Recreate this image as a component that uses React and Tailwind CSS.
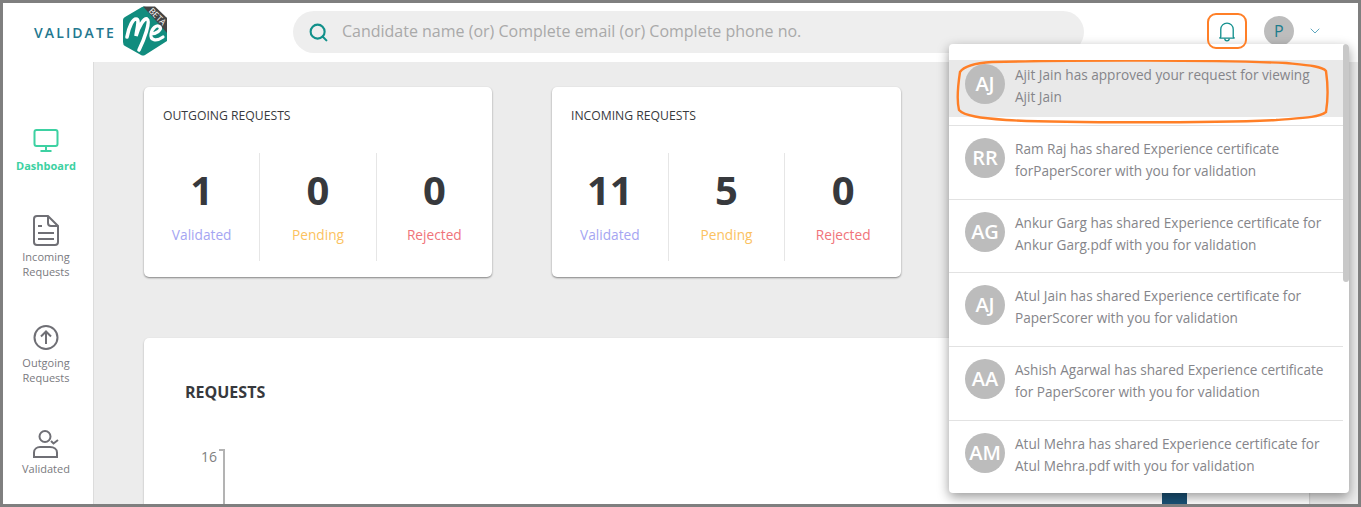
import React from 'react'
import { Search, ChevronDown } from 'lucide-react'

const NOTIFICATIONS = [
  { initials: 'AJ', lines: ['Ajit Jain has approved your request for viewing', 'Ajit Jain'], active: true },
  { initials: 'RR', lines: ['Ram Raj has shared Experience certificate', 'forPaperScorer with you for validation'] },
  { initials: 'AG', lines: ['Ankur Garg has shared Experience certificate for', 'Ankur Garg.pdf with you for validation'] },
  { initials: 'AJ', lines: ['Atul Jain has shared Experience certificate for', 'PaperScorer with you for validation'] },
  { initials: 'AA', lines: ['Ashish Agarwal has shared Experience certificate', 'for PaperScorer with you for validation'] },
  { initials: 'AM', lines: ['Atul Mehra has shared Experience certificate for', 'Atul Mehra.pdf with you for validation'] },
]

function Logo() {
  return (
    <svg width="46" height="51" viewBox="0 0 46 51" className="shrink-0">
      <path d="M20 1 Q22 0 24 1 L45 12 L45 35 L23 49 Q21 50 19 49 L3 40 Q1 39 1 36 L1 14 Q1 12 3 11 Z" fill="#118c7e" />
      <path d="M21 0.500 L33 0.500 L45 12 L45 27 Z" fill="#444444" />
      <path d="M5 31 C7 20 11 13 14 13 C18 13 15 22 14 30 C17 20 22 12 25 13 C29 15 22 34 17 44" fill="none" stroke="#fff" strokeWidth="3.600" strokeLinecap="round" />
      <path d="M29 28 C34 28 40 24 38 21 C35 18 30 22 29 28 C28 34 34 36 41 31" fill="none" stroke="#fff" strokeWidth="3.200" strokeLinecap="round" />
      <text x="35.500" y="13.500" fontSize="8.500" fill="#fff" textAnchor="middle" transform="rotate(45 35.500 10.500)" className="font-['Open_Sans',sans-serif]">BETA</text>
    </svg>
  )
}

function MonitorIcon() {
  return (
    <svg width="26" height="24" viewBox="0 0 26 24" fill="none" stroke="#3dd1a2" strokeWidth="2">
      <rect x="1.500" y="1" width="23" height="16" rx="2" />
      <path d="M13 17v4M7.500 22h11" />
    </svg>
  )
}

function DocIcon() {
  return (
    <svg width="26" height="31" viewBox="0 0 26 31" fill="none" stroke="#6f6f75" strokeWidth="2">
      <path d="M4 1h11l10 10v16a3 3 0 0 1-3 3H4a3 3 0 0 1-3-3V4a3 3 0 0 1 3-3Z" />
      <path d="M15 1v7a3 3 0 0 0 3 3h7" />
      <path d="M5 11h4M5 18h16M5 24h16" />
    </svg>
  )
}

function UpIcon() {
  return (
    <svg width="26" height="25" viewBox="0 0 26 25" fill="none" stroke="#6f6f75" strokeWidth="2">
      <circle cx="13" cy="12.500" r="11.500" />
      <path d="M13 19V7M8 11.500l5-5 5 5" />
    </svg>
  )
}

function PersonCheckIcon() {
  return (
    <svg width="26" height="28" viewBox="0 0 26 28" fill="none" stroke="#6f6f75" strokeWidth="2">
      <circle cx="12" cy="6.500" r="5.500" />
      <path d="M1 27v-4.500C1 19 4 17 7 17h10c4 0 7 2 7 5.500V27Z" />
      <path d="M18 11l2.500 2.500L25 10" />
    </svg>
  )
}

function NavItem({ icon, label, active, className, gap }) {
  return (
    <div className={`flex flex-col items-center ${className}`}>
      {icon}
      <div className={`text-center text-[11px] leading-[15px] ${gap} ${active ? 'font-bold text-[#3dd1a2]' : 'text-[#7a7a80]'}`}>
        {label.map((line) => (
          <div key={line}>{line}</div>
        ))}
      </div>
    </div>
  )
}

function Stat({ value, label, color, divider }) {
  return (
    <div className={`flex h-[108px] flex-1 flex-col items-center ${divider ? 'border-l border-[#e6e6e6]' : ''}`}>
      <div className="mt-[12px] text-[40px] leading-[50px] font-bold text-[#37393d]">{value}</div>
      <div className={`mt-[10px] text-[13.700px] leading-[20px] ${color}`}>{label}</div>
    </div>
  )
}

function StatCard({ title, stats, className }) {
  return (
    <div className={`h-[190px] shrink-0 rounded-[5px] bg-white pt-[21px] shadow-[0_1px_2px_rgba(0,0,0,0.45)] ${className}`}>
      <div className="pl-[19px] text-[12.200px] leading-[16px] text-[#37393d]">{title}</div>
      <div className="mt-[29px] flex">
        {stats.map((s, i) => (
          <Stat key={s.label} {...s} divider={i > 0} />
        ))}
      </div>
    </div>
  )
}

export default function App() {
  return (
    <div className="relative flex h-[507px] w-[1361px] flex-col overflow-hidden border-[3px] border-[#7f7f7f] bg-white font-['Open_Sans',sans-serif]">
      {/* top bar */}
      <header className="flex h-[59px] shrink-0 items-center">
        <div className="ml-[31px] text-[14px] font-semibold tracking-[2.100px] text-[#23788f]">VALIDATE</div>
        <div className="mt-[-3px] ml-[6px]">
          <Logo />
        </div>
        <div className="mt-[-1px] ml-[125px] flex h-[42px] w-[791px] items-center rounded-full bg-[#eeeeee] pl-[15px]">
          <Search className="h-[21px] w-[21px] text-[#11908a]" strokeWidth={2.400} />
          <span className="mt-[-2px] ml-[13px] text-[16px] text-[#a9a9a9]">Candidate name (or) Complete email (or) Complete phone no.</span>
        </div>
        <div className="mt-[-3px] ml-[124px] flex w-[38px] justify-center">
          <svg width="16" height="21" viewBox="0 0 18 23" fill="none" stroke="#13908e" strokeWidth="1.500">
            <path d="M2 17.500V9a7 7 0 0 1 14 0v8.500c0 .6.800 1.200 1.500 1.500h-17C1.200 18.700 2 18.100 2 17.500Z" />
            <path d="M6.500 19.500a2.500 2.500 0 0 0 5 0" />
          </svg>
        </div>
        <div className="mt-[-3px] ml-[18px] flex h-[30px] w-[30px] items-center justify-center rounded-full bg-[#bdbdbd] text-[16px] text-[#1c7c8c]">P</div>
        <ChevronDown className="mt-[-3px] ml-[13px] h-[16px] w-[16px] text-[#5fa8c0]" strokeWidth={1.500} />
      </header>

      <div className="flex min-h-0 flex-1">
        {/* side nav */}
        <nav className="w-[91px] shrink-0 border-r border-[#dcdcdc] bg-white pr-[4px]">
          <NavItem className="mt-[67px]" gap="mt-[5px]" icon={<MonitorIcon />} label={['Dashboard']} active />
          <NavItem className="mt-[42px]" gap="mt-[3px]" icon={<DocIcon />} label={['Incoming', 'Requests']} />
          <NavItem className="mt-[46px]" gap="mt-[5px]" icon={<UpIcon />} label={['Outgoing', 'Requests']} />
          <NavItem className="mt-[45px]" gap="mt-[3px]" icon={<PersonCheckIcon />} label={['Validated']} />
        </nav>

        {/* main area */}
        <main className="min-w-0 flex-1 overflow-hidden bg-[#ececec] pt-[25px] pl-[50px]">
          <div className="flex gap-[60px]">
            <StatCard
              className="w-[348px]"
              title="OUTGOING REQUESTS"
              stats={[
                { value: '1', label: 'Validated', color: 'text-[#a5a5f2]' },
                { value: '0', label: 'Pending', color: 'text-[#fbc25f]' },
                { value: '0', label: 'Rejected', color: 'text-[#f0737a]' },
              ]}
            />
            <StatCard
              className="w-[349px]"
              title="INCOMING REQUESTS"
              stats={[
                { value: '11', label: 'Validated', color: 'text-[#a5a5f2]' },
                { value: '5', label: 'Pending', color: 'text-[#fbc25f]' },
                { value: '0', label: 'Rejected', color: 'text-[#f0737a]' },
              ]}
            />
          </div>

          <section className="mt-[61px] h-[200px] w-[1165px] rounded-[5px] bg-white pt-[42px] pl-[41px] shadow-[0_1px_2px_rgba(0,0,0,0.3)]">
            <h2 className="text-[16px] leading-[24px] font-bold text-[#37393d]">REQUESTS</h2>
            <div className="mt-[45px] ml-[16px] flex">
              <span className="mt-[1px] text-[14px] leading-[14px] text-[#7f7f7f]">16</span>
              <div className="ml-[2px] h-[60px] w-[6px] border-t-2 border-r-2 border-[#b3b3b3]" />
              <div className="mt-[34px] ml-[937px] h-[30px] w-[25px] bg-[#1a5276]" />
            </div>
          </section>
        </main>
      </div>

      {/* notifications dropdown */}
      <div className="absolute top-[41px] left-[946px] h-[449px] w-[400px] overflow-hidden rounded-[4px] bg-white shadow-[0_4px_12px_rgba(0,0,0,0.4)]">
        <div className="absolute top-0 right-0 h-[238px] w-[6px] rounded-[3px] bg-[#c8c8c8]" />
        <div className="mr-[6px] pt-[16px]">
          {NOTIFICATIONS.map((n, i) => (
            <div key={i} className={`border-b border-[#e2e2e2] ${i === 0 ? 'h-[66px]' : 'h-[73.700px]'} ${i === 5 ? 'border-b-0' : ''}`}>
              <div className={`flex pl-[16px] ${i === 0 ? 'h-[57px] bg-[#e9e9e9] pt-[4px]' : 'pt-[12px]'}`}>
                <div className="flex h-[40px] w-[40px] shrink-0 items-center justify-center rounded-full bg-[#bcbcbc] text-[20px] font-semibold text-white">
                  {n.initials}
                </div>
                <div className="ml-[10px] text-[13.600px] leading-[22px] text-[#85858a]">
                  {n.lines.map((line) => (
                    <div key={line} className="whitespace-nowrap">{line}</div>
                  ))}
                </div>
              </div>
            </div>
          ))}
        </div>
      </div>

      {/* orange highlight marks */}
      <div className="absolute top-[10px] left-[1204px] h-[36px] w-[40px] rounded-[9px] border-[2px] border-[#ff7f27]" />
      <svg className="absolute top-[57px] left-[953px]" width="374" height="64" viewBox="0 0 374 64" fill="none" stroke="#ff7f27" strokeWidth="2.400">
        <path d="M36 2 C120 0 260 0 330 3 C350 5 366 6 370 11 C372 25 372 40 370 52 C362 58 345 58 320 60 C260 63 100 63 50 60 C25 58 8 56 3 50 C1 42 2 25 4 12 C8 6 20 3 36 2 Z" />
      </svg>
    </div>
  )
}
